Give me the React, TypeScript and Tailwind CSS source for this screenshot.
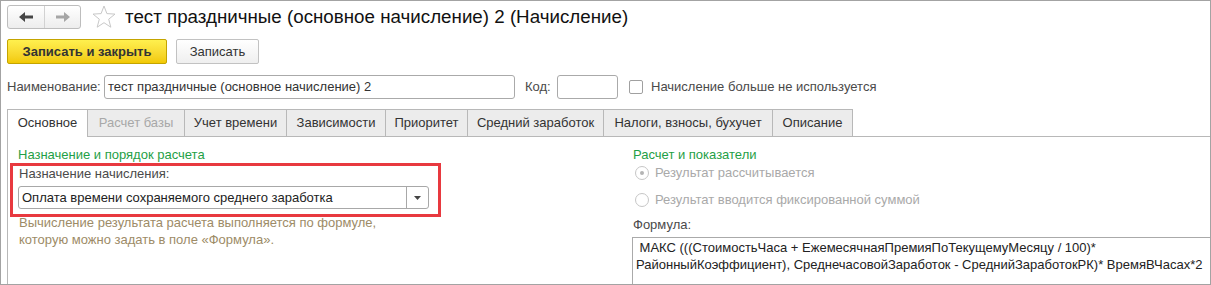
import React from "react";

const tabs: { label: string; w: string; active?: boolean; disabled?: boolean; last?: boolean }[] = [
  { label: "Основное", w: "w-[80px]", active: true },
  { label: "Расчет базы", w: "w-[97px]", disabled: true },
  { label: "Учет времени", w: "w-[102px]" },
  { label: "Зависимости", w: "w-[99px]" },
  { label: "Приоритет", w: "w-[82px]" },
  { label: "Средний заработок", w: "w-[136px]" },
  { label: "Налоги, взносы, бухучет", w: "w-[169px]" },
  { label: "Описание", w: "w-[81px]", last: true },
];

function Radio({ checked }: { checked?: boolean }) {
  return (
    <div className="w-[14px] h-[14px] rounded-full border border-[#c6c6c6] bg-white flex items-center justify-center shrink-0">
      {checked && <div className="w-[4px] h-[4px] rounded-full bg-[#b4b4b4]" />}
    </div>
  );
}

export default function App() {
  return (
    <div className="w-[1211px] h-[285px] overflow-hidden bg-white border border-[#a3a3a3] font-['Liberation_Sans',Arial,sans-serif] text-[13px] text-[#333] flex flex-col">
      {/* header */}
      <div className="flex items-center h-[23px] mt-[4px] ml-[6px] shrink-0">
        <div className="flex w-[74px] h-[24px] border border-[#bdbdbd] rounded-[3px] bg-gradient-to-b from-white to-[#ededed]">
          <div className="w-[37px] flex items-center justify-center border-r border-[#d2d2d2]">
            <svg width="14" height="10" viewBox="0 0 14 10">
              <path d="M0 5 L6 0 L6 3.5 L14 3.5 L14 6.5 L6 6.5 L6 10 Z" fill="#464646" />
            </svg>
          </div>
          <div className="flex-1 flex items-center justify-center">
            <svg width="14" height="10" viewBox="0 0 14 10">
              <path d="M14 5 L8 0 L8 3.5 L0 3.5 L0 6.5 L8 6.5 L8 10 Z" fill="#a6a6a6" />
            </svg>
          </div>
        </div>
        <svg className="ml-[11px]" width="24" height="24" viewBox="0 0 24 24">
          <polygon
            points="12,1 14.9,8.6 23,9.1 16.7,14.2 18.8,22.2 12,17.7 5.2,22.2 7.3,14.2 1,9.1 9.1,8.6"
            fill="white"
            stroke="#c8c8c8"
            strokeWidth="1"
            strokeLinejoin="round"
          />
        </svg>
        <div className="ml-[9px] text-[18.75px] text-[#111] leading-[23px] whitespace-nowrap">
          тест праздничные (основное начисление) 2 (Начисление)
        </div>
      </div>

      {/* buttons */}
      <div className="flex items-center mt-[11px] ml-[6px] shrink-0">
        <div className="w-[160px] h-[25px] rounded-[2px] border border-[#c4a400] bg-gradient-to-b from-[#fff04e] to-[#f2c900] flex items-center justify-center font-bold text-[#333]">
          Записать и закрыть
        </div>
        <div className="ml-[9px] w-[83px] h-[25px] rounded-[2px] border border-[#c2c2c2] bg-gradient-to-b from-white to-[#efefef] flex items-center justify-center text-[#333]">
          Записать
        </div>
      </div>

      {/* name row */}
      <div className="flex items-center mt-[11px] ml-[6px] h-[24px] shrink-0">
        <div className="w-[97px] text-[#4a4a4a] whitespace-nowrap">Наименование:</div>
        <div className="w-[411px] h-[24px] border border-[#aaaaaa] rounded-[3px] flex items-center pl-[3px] text-[#333] whitespace-nowrap">
          тест праздничные (основное начисление) 2
        </div>
        <div className="ml-[10px] w-[32px] text-[#4a4a4a]">Код:</div>
        <div className="w-[61px] h-[24px] border border-[#aaaaaa] rounded-[3px]" />
        <div className="ml-[11px] w-[14px] h-[14px] border border-[#a0a0a0] rounded-[2px] bg-white" />
        <div className="ml-[8px] text-[#4a4a4a] whitespace-nowrap">Начисление больше не используется</div>
      </div>

      {/* tabs + panel */}
      <div className="flex flex-col ml-[6px] mt-[10px] flex-1 min-h-0">
        <div className="flex items-end shrink-0">
          {tabs.map((t) => (
            <div
              key={t.label}
              className={
                t.active
                  ? `${t.w} h-[28px] -mb-px relative z-10 bg-white border-l border-t border-[#b8b8b8] flex items-center justify-center pb-[1px] text-[#333] whitespace-nowrap`
                  : `${t.w} h-[27px] bg-[#ececec] border-l border-t ${t.last ? "border-r" : ""} border-[#b8b8b8] flex items-center justify-center whitespace-nowrap ${t.disabled ? "text-[#a8a8a8]" : "text-[#333]"}`
              }
            >
              {t.label}
            </div>
          ))}
        </div>
        <div className="flex-1 border-l border-t border-[#b8b8b8] flex">
          {/* left column */}
          <div className="w-[624px] shrink-0 flex flex-col">
            <div className="ml-[10px] mt-[10px] leading-[16px] text-[#1fa046] whitespace-nowrap">
              Назначение и порядок расчета
            </div>
            <div className="ml-[2px] w-[431px] h-[54px] border-[3px] border-[#e8393f] flex flex-col">
              <div className="pl-[6px] leading-[16px] text-[#4a4a4a]">Назначение начисления:</div>
              <div className="ml-[5px] mt-[4px] w-[411px] h-[23px] border border-[#a8a8a8] rounded-[3px] flex">
                <div className="flex-1 flex items-center pl-[3px] text-[#222] whitespace-nowrap">
                  Оплата времени сохраняемого среднего заработка
                </div>
                <div className="w-[22px] border-l border-[#a8a8a8] flex items-center justify-center">
                  <svg width="7" height="4" viewBox="0 0 7 4">
                    <path d="M0 0 H7 L3.5 4 Z" fill="#444" />
                  </svg>
                </div>
              </div>
            </div>
            <div className="ml-[11px] mt-[-3px] leading-[17px] text-[#9d8b67]">
              <div>Вычисление результата расчета выполняется по формуле,</div>
              <div>которую можно задать в поле «Формула».</div>
            </div>
          </div>
          {/* right column */}
          <div className="flex-1 flex flex-col min-w-0">
            <div className="ml-[1px] mt-[10px] leading-[16px] text-[#1fa046] whitespace-nowrap">Расчет и показатели</div>
            <div className="flex items-center h-[18px] ml-[3px] mt-[1px]">
              <Radio checked />
              <div className="ml-[6px] text-[#a9a9a9] whitespace-nowrap">Результат рассчитывается</div>
            </div>
            <div className="flex items-center h-[18px] ml-[3px] mt-[9px]">
              <Radio />
              <div className="ml-[6px] text-[#a9a9a9] whitespace-nowrap">Результат вводится фиксированной суммой</div>
            </div>
            <div className="ml-[1px] mt-[8px] leading-[16px] text-[#4a4a4a]">Формула:</div>
            <div className="mt-[4px] w-[700px] h-[80px] border border-[#aaaaaa] pl-[3px] pt-[1px] leading-[17px] text-[#222] whitespace-pre">
              <div> МАКС (((СтоимостьЧаса + ЕжемесячнаяПремияПоТекущемуМесяцу / 100)*</div>
              <div>РайонныйКоэффициент), СреднечасовойЗаработок - СреднийЗаработокРК)* ВремяВЧасах*2</div>
            </div>
          </div>
        </div>
      </div>
    </div>
  );
}
